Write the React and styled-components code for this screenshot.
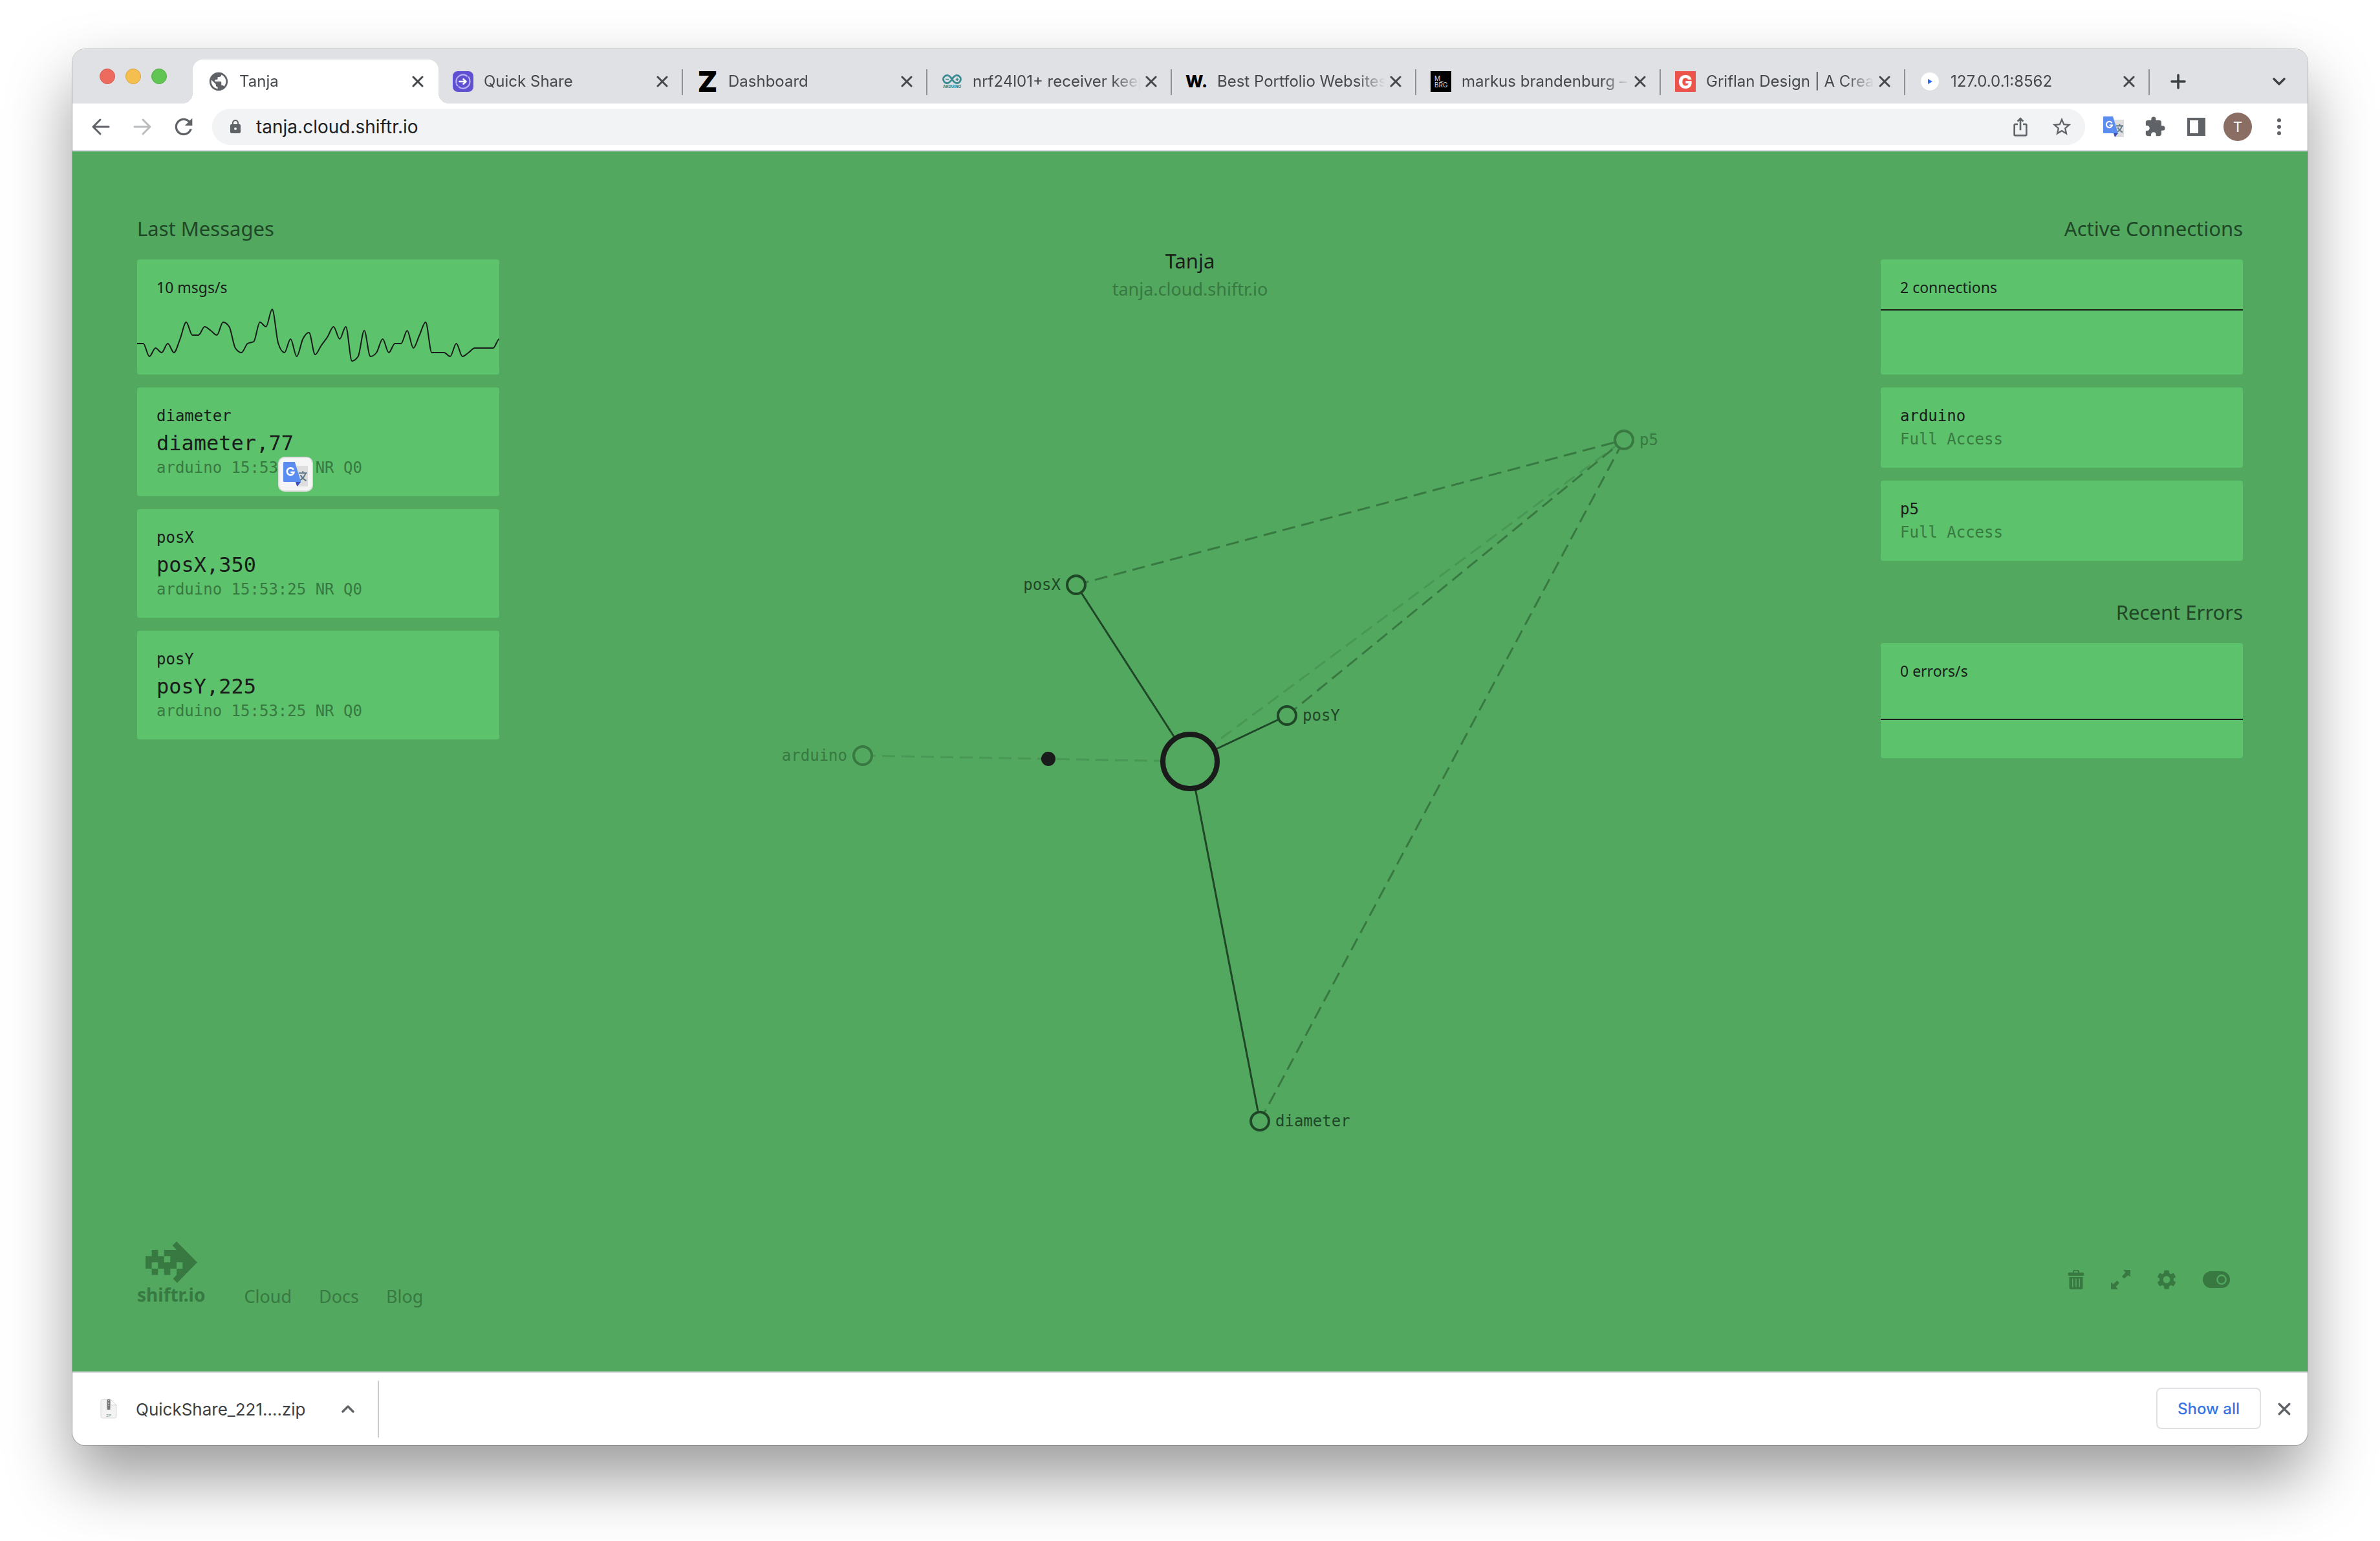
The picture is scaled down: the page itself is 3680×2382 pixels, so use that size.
import React from "react";
import styled, { createGlobalStyle, css } from "styled-components";
import { MdLock, MdExtension, MdStarBorder, MdRefresh, MdIosShare, MdPublic, MdSettings } from "react-icons/md";

const ui = `Inter, "Liberation Sans", sans-serif`;
const sans = `"Noto Sans", "Open Sans", sans-serif`;
const mono = `"DejaVu Sans Mono", "Liberation Mono", monospace`;

const color = {
  green: "#52a85f",
  card: "#5cc26b",
  ink: "#1a1c1b",
  heading: "#1f4727",
  muted: "#387841",
  faint: "#489754",
  strip: "#dfe1e5",
  icon: "#5f6368",
  tabText: "#45484c",
};

const GlobalStyle = createGlobalStyle`
  *, *::before, *::after { box-sizing: border-box; }
  body { margin: 0; background: #fff; font-family: ${ui}; }
  h1, h2, p, ul { margin: 0; padding: 0; font-weight: 400; list-style: none; }
  button { border: 0; padding: 0; background: none; font: inherit; color: inherit; cursor: pointer; }
  svg { display: block; flex-shrink: 0; }
`;

const Desktop = styled.div`
  display: flex;
  min-height: 100vh;
  padding: 76px 112px 148px;
`;

const Window = styled.div`
  flex: 1;
  min-width: 0;
  display: flex;
  flex-direction: column;
  border-radius: 20px;
  overflow: hidden;
  background: #fff;
  box-shadow: 0 0 0 1px rgba(0, 0, 0, 0.22), 0 50px 100px rgba(0, 0, 0, 0.4);
`;

/* Tab strip */

const TabStrip = styled.div`
  display: flex;
  align-items: flex-end;
  height: 84px;
  background: ${color.strip};
`;

const Lights = styled.div`
  display: flex;
  align-items: center;
  align-self: stretch;
  gap: 16px;
  width: 186px;
  padding-left: 42px;
`;

const Light = styled.button`
  width: 24px;
  height: 24px;
  border-radius: 50%;
  background: ${(p) => p.$fill};
  border: 1px solid ${(p) => p.$edge};
`;

const separator = css`
  &::before {
    content: "";
    position: absolute;
    left: 0;
    top: 15px;
    width: 2px;
    height: 40px;
    background: #8d9095;
  }
`;

const Tab = styled.div`
  position: relative;
  display: flex;
  align-items: center;
  flex: 0 1 378px;
  min-width: 0;
  height: 68px;
  padding: 0 14px 0 24px;
  ${(p) => p.$line && separator}
  ${(p) =>
    p.$active &&
    css`
      flex-basis: 380px;
      margin-right: -2px;
      padding-right: 16px;
      background: #fff;
      border-radius: 16px 16px 0 0;
      &::before,
      &::after {
        content: "";
        position: absolute;
        bottom: 0;
        width: 16px;
        height: 16px;
      }
      &::before {
        left: -16px;
        background: radial-gradient(circle at 0 0, transparent 16px, #fff 16px);
      }
      &::after {
        right: -16px;
        background: radial-gradient(circle at 100% 0, transparent 16px, #fff 16px);
      }
    `}
`;

const TabTitle = styled.button`
  flex: 1;
  min-width: 0;
  display: flex;
  align-items: center;
  gap: 16px;
  height: 40px;
  color: ${color.tabText};
  font-size: 24px;
  text-align: left;
`;

const TabLabel = styled.span`
  flex: 1;
  min-width: 0;
  overflow: hidden;
  white-space: nowrap;
  line-height: 36px;
  mask-image: linear-gradient(to right, #000 calc(100% - 44px), transparent);
`;

const Favicon = styled.span`
  display: flex;
  align-items: center;
  justify-content: center;
  width: 32px;
  height: 32px;
`;

const IconButton = styled.button`
  position: relative;
  display: flex;
  align-items: center;
  justify-content: center;
  flex: none;
  width: ${(p) => p.$w || 64}px;
  height: ${(p) => p.$h || 56}px;
  color: ${(p) => p.$color || color.icon};
  margin-left: ${(p) => (p.$push ? "auto" : 0)};
  ${(p) => p.$line && separator}
`;

/* Address bar */

const Toolbar = styled.div`
  display: flex;
  align-items: center;
  gap: 12px;
  padding: 8px 12px;
  border-bottom: 2px solid #dadce0;
`;

const ButtonRow = styled.div`
  display: flex;
  align-items: center;
`;

const Omnibox = styled.form`
  flex: 1;
  min-width: 0;
  display: flex;
  align-items: center;
  height: 56px;
  padding: 0 4px 0 24px;
  border-radius: 28px;
  background: #f1f3f4;
  color: ${color.icon};
`;

const Address = styled.input`
  flex: 1;
  min-width: 0;
  margin-left: 20px;
  padding: 0;
  border: 0;
  outline: 0;
  background: none;
  color: #202124;
  font: 400 28px/40px ${ui};
`;

const Avatar = styled.span`
  display: flex;
  align-items: center;
  justify-content: center;
  width: 44px;
  height: 44px;
  border-radius: 50%;
  background: #8a6e64;
  color: #fff;
  font-size: 22px;
`;

/* Page */

const Page = styled.main`
  position: relative;
  flex: 1;
  display: flex;
  flex-direction: column;
  justify-content: space-between;
  padding: 99px 100px 98px;
  background: ${color.green};
  font-family: ${sans};
`;

const Graph = styled.svg`
  position: absolute;
  inset: 0;
  width: 100%;
  height: 100%;
`;

const Columns = styled.div`
  position: relative;
  display: grid;
  grid-template-columns: 560px 1fr 560px;
  align-items: start;
`;

const Section = styled.section`
  display: flex;
  flex-direction: column;
  gap: 20px;
  & + & {
    margin-top: 59px;
  }
`;

const SectionTitle = styled.h2`
  margin-bottom: 8px;
  color: ${color.heading};
  font-size: 31px;
  line-height: 40px;
  text-align: ${(p) => (p.$right ? "right" : "left")};
`;

const Card = styled.article`
  position: relative;
  padding: 26px 30px;
  border-radius: 4px;
  background: ${color.card};
`;

const ChartCard = styled.article`
  padding-top: 25px;
  border-radius: 4px;
  background: ${color.card};
`;

const ChartLabel = styled.p`
  padding: 0 30px;
  color: ${color.ink};
  font-size: 23px;
  line-height: 36px;
`;

const ChartSvg = styled.svg`
  width: 100%;
  height: 117px;
`;

const Line = styled.p`
  color: ${(p) => (p.$muted ? color.muted : color.ink)};
  font-family: ${mono};
  font-size: 24px;
  line-height: 36px;
`;

const Payload = styled.p`
  padding-top: 4px;
  color: ${color.ink};
  font-family: ${mono};
  font-size: 32px;
  line-height: 40px;
`;

const TranslateBubble = styled.button`
  position: absolute;
  left: 218px;
  top: 107px;
  display: flex;
  align-items: center;
  justify-content: center;
  width: 54px;
  height: 54px;
  border: 2px solid #dcdfdc;
  border-radius: 10px;
  background: #f5f5f5;
`;

const Heading = styled.header`
  padding-top: 48px;
  text-align: center;
  line-height: 44px;
`;

const Name = styled.h1`
  color: ${color.ink};
  font-size: 31px;
`;

const Host = styled.p`
  color: ${color.muted};
  font-size: 27px;
`;

const NodeLabel = styled.text`
  font-family: ${mono};
  font-size: 24px;
`;

const Footer = styled.footer`
  position: relative;
  display: flex;
  align-items: flex-end;
  line-height: 36px;
  color: ${color.muted};
`;

const Brand = styled.a`
  display: flex;
  flex-direction: column;
  align-items: center;
  padding-bottom: 3px;
  color: inherit;
  font-size: 28px;
  font-weight: 700;
  text-decoration: none;
`;

const Links = styled.nav`
  display: flex;
  gap: 42px;
  margin-left: 60px;
`;

const Link = styled.a`
  color: inherit;
  font-size: 27px;
  text-decoration: none;
`;

const Tools = styled.div`
  display: flex;
  align-items: center;
  gap: 41px;
  margin-left: auto;
  padding: 0 20px 28px 0;
`;

/* Download shelf */

const Shelf = styled.div`
  display: flex;
  align-items: center;
  height: 114px;
  padding-right: 14px;
  border-top: 2px solid #dadce0;
`;

const Download = styled.div`
  display: flex;
  align-items: center;
  width: 474px;
  height: 88px;
  padding-left: 40px;
  border-right: 2px solid #ccc;
`;

const FileName = styled.button`
  display: flex;
  align-items: center;
  gap: 28px;
  flex: 1;
  white-space: nowrap;
  color: #3c4043;
  font-size: 26px;
`;

const ShowAll = styled.button`
  width: 162px;
  height: 64px;
  margin: 0 14px 2px auto;
  border: 2px solid #e0e1e4;
  border-radius: 8px;
  color: #3574e2;
  font-size: 24px;
  font-weight: 500;
`;

const Close = ({ size = 18, w = 3 }) => (
  <svg width={size} height={size} viewBox="0 0 18 18" fill="none" stroke="currentColor" strokeWidth={w} strokeLinecap="round">
    <path d="M2 2L16 16M16 2L2 16" />
  </svg>
);

const Chevron = ({ up }) => (
  <svg width="20" height="14" viewBox="0 0 20 14" fill="none" stroke="currentColor" strokeWidth="3.4" strokeLinecap="round" strokeLinejoin="round">
    <path d={up ? "M2 11L10 3L18 11" : "M2 3L10 11L18 3"} />
  </svg>
);

const Arrow = ({ forward }) => (
  <svg width="32" height="32" viewBox="0 0 32 32" fill="none" stroke="currentColor" strokeWidth="3" strokeLinecap="round" strokeLinejoin="round">
    <path d={forward ? "M4 16H28M17 5L28 16L17 27" : "M28 16H4M15 5L4 16L15 27"} />
  </svg>
);

const TranslateIcon = ({ size = 32 }) => (
  <svg width={size} height={size} viewBox="0 0 32 32">
    <path d="M12 5H31a1 1 0 0 1 1 1V31a1 1 0 0 1-1 1H18z" fill="#dedede" />
    <path d="M20 14.500H31M25.500 12V14.500M29 14.500C28 19 24.500 22.500 20.500 24.500M22.500 17C24 20 27 23 30 24.500" fill="none" stroke="#607988" strokeWidth="1.800" />
    <path d="M16 26H23L18 32z" fill="#3a4fb4" />
    <path d="M1 0H15L23 26H1a1 1 0 0 1-1-1V1a1 1 0 0 1 1-1z" fill="#5b8cf0" />
    <path d="M13.500 10.200A4.600 4.600 0 1 0 14 13.500H9.500" fill="none" stroke="#fff" strokeWidth="2.200" />
  </svg>
);

const QuickShareIcon = () => (
  <svg width="32" height="32" viewBox="0 0 32 32" fill="none">
    <rect width="32" height="32" rx="8" fill="#5f50d2" />
    <path d="M5.500 17.500A10.500 10.500 0 0 1 22 7.500M26.300 14A10.500 10.500 0 0 1 9.500 24.300" stroke="#b9b1f2" strokeWidth="2.200" strokeLinecap="round" />
    <path d="M24 8.500a10.500 10.500 0 0 1 2.500 5M8 23a10.500 10.500 0 0 1-2.500-4" stroke="#b9b1f2" strokeWidth="2.200" />
    <path d="M10.500 16H20M16.500 12.500L20.500 16L16.500 19.500" stroke="#fff" strokeWidth="2.600" strokeLinecap="round" strokeLinejoin="round" />
  </svg>
);

const TextMark = styled.span`
  color: #000;
  font-size: ${(p) => p.$size}px;
  font-weight: ${(p) => p.$weight || 900};
  line-height: 32px;
`;

const ArduinoIcon = () => (
  <svg width="32" height="32" viewBox="0 0 32 32" fill="none" stroke="#3a8c92">
    <path d="M16 12.500C13.500 8.500 11.500 6.500 8.500 6.500a6 6 0 0 0 0 12C11.500 18.500 13.500 16.500 16 12.500C18.500 8.500 20.500 6.500 23.500 6.500a6 6 0 0 1 0 12C20.500 18.500 18.500 16.500 16 12.500z" strokeWidth="2.800" />
    <path d="M6 12.500H11M21.500 12.500H26.500M24 10V15" strokeWidth="1.600" />
    <text x="16" y="26" fontSize="6" fontWeight="800" fill="#3a8c92" stroke="none" textAnchor="middle" fontFamily={ui}>ARDUINO</text>
  </svg>
);

const MarkusIcon = () => (
  <svg width="32" height="32" viewBox="0 0 32 32">
    <rect width="32" height="32" fill="#000" />
    <text x="6" y="15" fontSize="10" fill="#ddd" fontFamily={ui}>M_</text>
    <text x="6" y="25" fontSize="10" fill="#ddd" fontFamily={ui}>BRG</text>
  </svg>
);

const GriflanIcon = () => (
  <svg width="32" height="32" viewBox="0 0 32 32">
    <rect width="32" height="32" fill="#ec544b" />
    <text x="16" y="26.500" fontSize="29" fontWeight="800" fill="#fff" textAnchor="middle" fontFamily={ui}>G</text>
  </svg>
);

const PlayIcon = () => (
  <svg width="32" height="32" viewBox="0 0 32 32">
    <circle cx="16" cy="16.500" r="14" fill="#c9cbd0" />
    <circle cx="16" cy="16" r="14" fill="#fff" />
    <path d="M13 12L20 16L13 20z" fill="#2f6bf2" />
  </svg>
);

const ZipIcon = () => (
  <svg width="30" height="34" viewBox="0 0 30 34">
    <path d="M6 2.500H19L28 11V28.500a2.500 2.500 0 0 1-2.500 2.500H6.500a2.500 2.500 0 0 1-2.500-2.500V4.500a2 2 0 0 1 2-2z" fill="#f3f3f3" stroke="#dcdcdc" strokeWidth="1" />
    <path d="M19 2.500V9a2 2 0 0 0 2 2H28z" fill="#fff" stroke="#d4d4d4" strokeWidth="1" />
    <rect x="13.500" y="2" width="5" height="16" rx="1.500" fill="#777" />
    <path d="M16 3V12" stroke="#ccc" strokeWidth="1.600" strokeDasharray="2 2" />
    <text x="16" y="29" fontSize="5" fill="#888" textAnchor="middle" fontFamily={ui}>ZIP</text>
  </svg>
);

const BrandIcon = () => (
  <svg width="80" height="64" viewBox="100 57 240 192" fill="currentColor">
    <path
      fillRule="evenodd"
      d="M244 57L340 154L247 249L228 230L244 212V183H215V212H186V183H158V212H129V183H100V125H129V96H158V125H186V96H244L225 76ZM186 125H215V154H186ZM129 154H158V183H129ZM244 154H272V183H244Z"
    />
  </svg>
);

const TrashIcon = () => (
  <svg width="26" height="30" viewBox="0 0 26 30" fill="currentColor">
    <path d="M9 5V3a2.500 2.500 0 0 1 2.500-2.500h3A2.500 2.500 0 0 1 17 3V5" fill="none" stroke="currentColor" strokeWidth="2" />
    <rect x="0.500" y="4" width="25" height="5" rx="2" />
    <path fillRule="evenodd" d="M2.500 11H23.500V27a3 3 0 0 1-3 3H5.500a3 3 0 0 1-3-3zM7 13.500V26.500H8.500V13.500zM12.200 13.500V26.500H13.800V13.500zM17.500 13.500V26.500H19V13.500z" />
  </svg>
);

const ExpandIcon = () => (
  <svg width="30" height="30" viewBox="0 0 30 30" fill="currentColor">
    <path d="M19 0H30V11L26.500 8L20.500 13.500L17 10L22.500 4z" />
    <path d="M11 30H0V19L3.500 22L9.500 16.500L13 20L7.500 26z" />
  </svg>
);

const ToggleIcon = () => (
  <svg width="42" height="26" viewBox="0 0 42 26">
    <rect width="42" height="26" rx="13" fill="currentColor" />
    <circle cx="29" cy="13" r="6.700" fill="none" stroke={color.green} strokeWidth="2.400" />
  </svg>
);

const tabs = [
  { title: "Tanja", icon: <MdPublic size={34} color={color.icon} />, active: true },
  { title: "Quick Share", icon: <QuickShareIcon /> },
  { title: "Dashboard", icon: <TextMark $size={44}>Z</TextMark>, line: true },
  { title: "nrf24l01+ receiver keeps", icon: <ArduinoIcon />, line: true },
  { title: "Best Portfolio Websites", icon: <TextMark $size={26} $weight={800}>W.</TextMark>, line: true },
  { title: "markus brandenburg – de", icon: <MarkusIcon />, line: true },
  { title: "Griflan Design | A Creative", icon: <GriflanIcon />, line: true },
  { title: "127.0.0.1:8562", icon: <PlayIcon />, line: true },
];

const messages = [
  { topic: "diameter", payload: "diameter,77", meta: "arduino 15:53:25 NR Q0", translate: true },
  { topic: "posX", payload: "posX,350", meta: "arduino 15:53:25 NR Q0" },
  { topic: "posY", payload: "posY,225", meta: "arduino 15:53:25 NR Q0" },
];

const connections = ["arduino", "p5"];

const rates = [
  69, 69, 89, 76, 83, 69, 83, 62, 36, 56, 56, 43, 49, 56, 36, 43, 76, 83, 69, 66, 36, 43, 16, 69, 83, 62, 89, 62, 52, 86,
  72, 59, 43, 62, 43, 96, 89, 49, 89, 83, 62, 83, 69, 69, 49, 76, 56, 36, 83, 83, 83, 89, 69, 89, 83, 76, 76, 76, 76, 62,
];

/* Monotone cubic interpolation: smooth between samples, never overshoots them. */
function monotonePath(values, width) {
  const step = width / (values.length - 1);
  const slope = values.map((v, i) => {
    if (i === 0 || i === values.length - 1) return 0;
    const a = (v - values[i - 1]) / step;
    const b = (values[i + 1] - v) / step;
    return (Math.sign(a) + Math.sign(b)) * Math.min(Math.abs(a), Math.abs(b), Math.abs(a + b) / 4);
  });
  return values.reduce((d, v, i) => {
    if (i === 0) return `M0 ${v}`;
    const x = i * step;
    const h = step / 3;
    return `${d}C${x - step + h} ${values[i - 1] + slope[i - 1] * h} ${x - h} ${v - slope[i] * h} ${x} ${v}`;
  }, "");
}

const Chart = ({ label, values }) => (
  <ChartCard>
    <ChartLabel>{label}</ChartLabel>
    <ChartSvg viewBox="0 0 560 117" preserveAspectRatio="none" aria-hidden="true">
      <path d={monotonePath(values, 560)} fill="none" stroke={color.ink} strokeWidth="2" />
    </ChartSvg>
  </ChartCard>
);

const nodes = {
  center: { x: 0, y: 0 },
  posX: { x: -176, y: -273, side: "left", color: color.heading },
  posY: { x: 150, y: -71, side: "right", color: color.heading },
  diameter: { x: 108, y: 556, side: "right", color: color.heading },
  p5: { x: 671, y: -497, side: "right", color: color.muted },
  arduino: { x: -506, y: -9, side: "left", color: color.muted },
};

const edges = [
  { from: "arduino", to: "center", color: color.faint, dashed: true },
  { from: "center", to: "p5", color: color.faint, dashed: true },
  { from: "posX", to: "p5", color: color.muted, dashed: true },
  { from: "posY", to: "p5", color: color.muted, dashed: true },
  { from: "diameter", to: "p5", color: color.muted, dashed: true },
  { from: "center", to: "posX", color: color.heading },
  { from: "center", to: "posY", color: color.heading },
  { from: "center", to: "diameter", color: color.heading },
];

const NetworkGraph = () => (
  <Graph viewBox="-1728 -943 3456 1886">
    {edges.map((e) => (
      <line
        key={e.from + e.to}
        x1={nodes[e.from].x}
        y1={nodes[e.from].y}
        x2={nodes[e.to].x}
        y2={nodes[e.to].y}
        stroke={e.color}
        strokeWidth="3"
        strokeDasharray={e.dashed ? "20 10" : undefined}
      />
    ))}
    {Object.entries(nodes)
      .filter(([name]) => name !== "center")
      .map(([name, n]) => (
        <g key={name}>
          <circle cx={n.x} cy={n.y} r="14" fill={color.green} stroke={n.color} strokeWidth="4" />
          <NodeLabel x={n.side === "left" ? n.x - 24 : n.x + 24} y={n.y + 8} fill={n.color} textAnchor={n.side === "left" ? "end" : "start"}>
            {name}
          </NodeLabel>
        </g>
      ))}
    <circle cx="0" cy="0" r="42" fill={color.green} stroke={color.ink} strokeWidth="8" />
    <circle cx="-219" cy="-4" r="11" fill={color.ink} />
  </Graph>
);

export default function App() {
  return (
    <Desktop>
      <GlobalStyle />
      <Window>
        <TabStrip>
          <Lights>
            <Light aria-label="Close window" $fill="#ec6a5e" $edge="#d5594d" />
            <Light aria-label="Minimise window" $fill="#f4bf4f" $edge="#d9a440" />
            <Light aria-label="Zoom window" $fill="#61c554" $edge="#50ab43" />
          </Lights>
          {tabs.map((t) => (
            <Tab key={t.title} $active={t.active} $line={t.line}>
              <TabTitle>
                <Favicon>{t.icon}</Favicon>
                <TabLabel>{t.title}</TabLabel>
              </TabTitle>
              <IconButton aria-label="Close tab" $w={32} $h={32} $color={color.tabText}>
                <Close />
              </IconButton>
            </Tab>
          ))}
          <IconButton aria-label="New tab" $w={92} $h={68} $line $color="#3c4043">
            <svg width="24" height="24" viewBox="0 0 24 24" stroke="currentColor" strokeWidth="3.600" strokeLinecap="round">
              <path d="M2 12H22M12 2V22" />
            </svg>
          </IconButton>
          <IconButton aria-label="Search tabs" $w={88} $h={68} $push $color="#3c4043">
            <Chevron />
          </IconButton>
        </TabStrip>

        <Toolbar>
          <ButtonRow>
            <IconButton aria-label="Back"><Arrow /></IconButton>
            <IconButton aria-label="Forward" $color="#babcbe"><Arrow forward /></IconButton>
            <IconButton aria-label="Reload"><MdRefresh size={40} /></IconButton>
          </ButtonRow>
          <Omnibox onSubmit={(e) => e.preventDefault()}>
            <MdLock size={24} />
            <Address aria-label="Address" defaultValue="tanja.cloud.shiftr.io" />
            <IconButton type="button" aria-label="Share"><MdIosShare size={32} /></IconButton>
            <IconButton type="button" aria-label="Bookmark"><MdStarBorder size={34} /></IconButton>
          </Omnibox>
          <ButtonRow>
            <IconButton aria-label="Translate"><TranslateIcon /></IconButton>
            <IconButton aria-label="Extensions"><MdExtension size={34} /></IconButton>
            <IconButton aria-label="Side panel">
              <svg width="28" height="28" viewBox="0 0 28 28">
                <path fill="currentColor" fillRule="evenodd" d="M0 0H28V28H0zM4 4V24H17V4z" />
              </svg>
            </IconButton>
            <IconButton aria-label="Profile"><Avatar>T</Avatar></IconButton>
            <IconButton aria-label="Menu">
              <svg width="8" height="28" viewBox="0 0 8 28" fill="currentColor">
                <circle cx="4" cy="4" r="3" />
                <circle cx="4" cy="14" r="3" />
                <circle cx="4" cy="24" r="3" />
              </svg>
            </IconButton>
          </ButtonRow>
        </Toolbar>

        <Page>
          <NetworkGraph />
          <Columns>
            <Section>
              <SectionTitle>Last Messages</SectionTitle>
              <Chart label="10 msgs/s" values={rates} />
              {messages.map((m) => (
                <Card key={m.topic}>
                  <Line>{m.topic}</Line>
                  <Payload>{m.payload}</Payload>
                  <Line $muted>{m.meta}</Line>
                  {m.translate && (
                    <TranslateBubble aria-label="Translate selection">
                      <TranslateIcon size={38} />
                    </TranslateBubble>
                  )}
                </Card>
              ))}
            </Section>

            <Heading>
              <Name>Tanja</Name>
              <Host>tanja.cloud.shiftr.io</Host>
            </Heading>

            <div>
              <Section>
                <SectionTitle $right>Active Connections</SectionTitle>
                <Chart label="2 connections" values={[17, 17]} />
                {connections.map((name) => (
                  <Card key={name}>
                    <Line>{name}</Line>
                    <Line $muted>Full Access</Line>
                  </Card>
                ))}
              </Section>
              <Section>
                <SectionTitle $right>Recent Errors</SectionTitle>
                <Chart label="0 errors/s" values={[57, 57]} />
              </Section>
            </div>
          </Columns>

          <Footer>
            <Brand href="#home">
              <BrandIcon />
              shiftr.io
            </Brand>
            <Links>
              <Link href="#cloud">Cloud</Link>
              <Link href="#docs">Docs</Link>
              <Link href="#blog">Blog</Link>
            </Links>
            <Tools>
              <IconButton aria-label="Clear" $w={26} $h={32} $color={color.muted}><TrashIcon /></IconButton>
              <IconButton aria-label="Full screen" $w={30} $h={32} $color={color.muted}><ExpandIcon /></IconButton>
              <IconButton aria-label="Settings" $w={30} $h={32} $color={color.muted}><MdSettings size={36} /></IconButton>
              <IconButton aria-label="Toggle panels" $w={42} $h={32} $color={color.muted}><ToggleIcon /></IconButton>
            </Tools>
          </Footer>
        </Page>

        <Shelf>
          <Download>
            <FileName>
              <ZipIcon />
              QuickShare_221....zip
            </FileName>
            <IconButton aria-label="Download options" $w={92}><Chevron up /></IconButton>
          </Download>
          <ShowAll>Show all</ShowAll>
          <IconButton aria-label="Close downloads" $w={44}><Close size={20} /></IconButton>
        </Shelf>
      </Window>
    </Desktop>
  );
}
